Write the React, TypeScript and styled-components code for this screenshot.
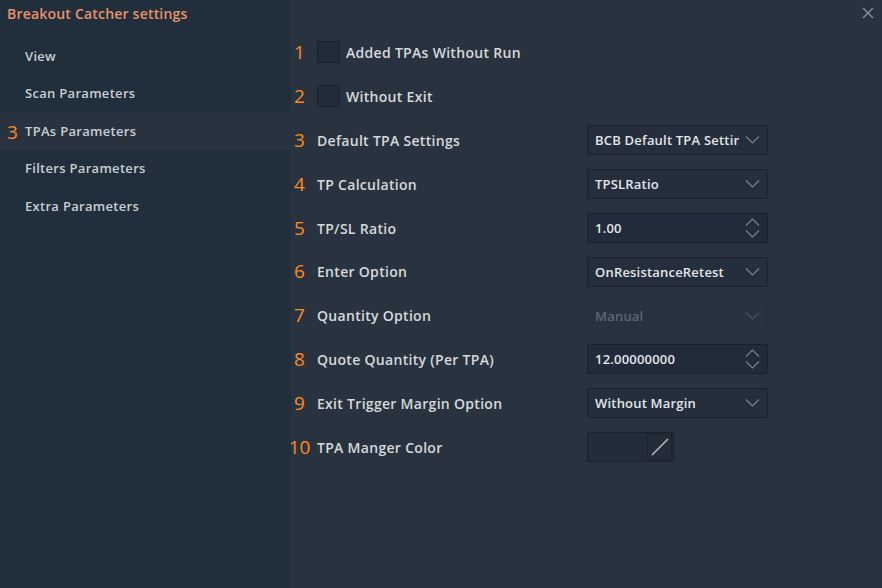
import React from 'react'
import styled, { createGlobalStyle } from 'styled-components'

const GlobalStyle = createGlobalStyle`
  html, body {
    margin: 0;
    padding: 0;
    background: #29333f;
  }
  * {
    box-sizing: border-box;
  }
`

const Window = styled.div`
  display: flex;
  width: 882px;
  height: 588px;
  overflow: hidden;
  background: #29333f;
  font-family: 'Open Sans', 'Noto Sans', sans-serif;
  position: relative;
`

const Sidebar = styled.div`
  width: 291px;
  flex-shrink: 0;
  background: #212e3c;
  display: flex;
  flex-direction: column;
`

const Title = styled.div`
  height: 26px;
  padding: 4px 0 0 7px;
  font-size: 14px;
  font-weight: 600;
  letter-spacing: 0.2px;
  color: #e8926a;
`

const NavList = styled.div`
  display: flex;
  flex-direction: column;
  padding-top: 11px;
`

const NavItem = styled.div<{ $active?: boolean }>`
  height: 37.5px;
  display: flex;
  align-items: center;
  padding-left: 25px;
  position: relative;
  font-size: 13px;
  font-weight: 600;
  letter-spacing: 0.3px;
  color: #c9ced4;
  background: ${(p) => (p.$active ? '#29333f' : 'transparent')};
`

const NavMark = styled.span`
  position: absolute;
  left: 7px;
  top: 7px;
  font-size: 19px;
  font-weight: 400;
  letter-spacing: 0;
  color: #ff8a1c;
`

const Main = styled.div`
  flex: 1;
  display: flex;
  flex-direction: column;
  padding-top: 31px;
`

const Row = styled.div`
  height: 43.8px;
  display: flex;
  align-items: center;
`

const Num = styled.div`
  width: 25px;
  margin-left: -4px;
  text-align: center;
  font-size: 19px;
  color: #ff8a1c;
  line-height: 1;
`

const Label = styled.div`
  width: 270px;
  margin-left: 5px;
  font-size: 14px;
  font-weight: 600;
  letter-spacing: 0.3px;
  color: #d6d9dc;
`

const CheckRow = styled.div`
  display: flex;
  align-items: center;
  gap: 6px;
  margin-left: 5px;
  font-size: 14px;
  font-weight: 600;
  letter-spacing: 0.3px;
  color: #d6d9dc;
`

const Checkbox = styled.div`
  width: 23px;
  height: 22px;
  background: #222c38;
  border: 1px solid #1a222b;
  border-radius: 2px;
  margin-top: -1px;
`

const Field = styled.div<{ $disabled?: boolean; $input?: boolean }>`
  width: 181px;
  height: 30px;
  display: flex;
  align-items: center;
  justify-content: space-between;
  padding: 0 7px 0 7px;
  background: ${(p) => (p.$disabled ? '#29333f' : p.$input ? '#212b39' : '#242e3c')};
  border: 1px solid ${(p) => (p.$disabled ? '#252e3a' : '#1a212a')};
  border-radius: 2px;
  font-size: 13px;
  font-weight: 600;
  letter-spacing: 0.2px;
  color: ${(p) => (p.$disabled ? '#5f6670' : '#e3e6ea')};
`

const FieldText = styled.span`
  white-space: nowrap;
  overflow: hidden;
  flex: 1;
  margin-right: 6px;
`

const ColorBox = styled.div`
  width: 87px;
  height: 30px;
  display: flex;
  justify-content: flex-end;
  padding: 1px;
  background: #232d3a;
  border: 1px solid #1a212a;
  border-radius: 2px;
`

const Swatch = styled.div`
  width: 25px;
  height: 26px;
  border: 1px solid #1c232c;
  display: flex;
  align-items: center;
  justify-content: center;
`

const Close = styled.div`
  position: absolute;
  right: 6px;
  top: 5px;
  width: 16px;
  height: 16px;
  display: flex;
  align-items: center;
  justify-content: center;
`

const Chevron = ({ up, color = '#7b828c' }: { up?: boolean; color?: string }) => (
  <svg width="15" height="8" viewBox="0 0 15 8">
    <path
      d={up ? 'M1 7.5L7.5 1L14 7.5' : 'M1 0.5L7.5 7L14 0.5'}
      fill="none"
      stroke={color}
      strokeWidth="1.2"
    />
  </svg>
)

const Spinner = styled.div`
  display: flex;
  flex-direction: column;
  gap: 4px;
`

interface FieldRow {
  label: string
  value?: string
  kind: 'check' | 'select' | 'number' | 'disabled' | 'color'
}

const rows: FieldRow[] = [
  { label: 'Added TPAs Without Run', kind: 'check' },
  { label: 'Without Exit', kind: 'check' },
  { label: 'Default TPA Settings', value: 'BCB Default TPA Settings', kind: 'select' },
  { label: 'TP Calculation', value: 'TPSLRatio', kind: 'select' },
  { label: 'TP/SL Ratio', value: '1.00', kind: 'number' },
  { label: 'Enter Option', value: 'OnResistanceRetest', kind: 'select' },
  { label: 'Quantity Option', value: 'Manual', kind: 'disabled' },
  { label: 'Quote Quantity (Per TPA)', value: '12.00000000', kind: 'number' },
  { label: 'Exit Trigger Margin Option', value: 'Without Margin', kind: 'select' },
  { label: 'TPA Manger Color', kind: 'color' },
]

const navItems = ['View', 'Scan Parameters', 'TPAs Parameters', 'Filters Parameters', 'Extra Parameters']

function Control({ row }: { row: FieldRow }) {
  if (row.kind === 'color') {
    return (
      <ColorBox>
        <Swatch>
          <svg width="20" height="20" viewBox="0 0 20 20">
            <path d="M2 18L18 2" stroke="#b9bcc0" strokeWidth="1.6" />
          </svg>
        </Swatch>
      </ColorBox>
    )
  }
  if (row.kind === 'number') {
    return (
      <Field $input>
        <FieldText>{row.value}</FieldText>
        <Spinner>
          <Chevron up />
          <Chevron />
        </Spinner>
      </Field>
    )
  }
  const disabled = row.kind === 'disabled'
  return (
    <Field $disabled={disabled}>
      <FieldText>{row.value}</FieldText>
      <Chevron color={disabled ? '#4a525c' : '#7b828c'} />
    </Field>
  )
}

export default function App() {
  return (
    <>
      <GlobalStyle />
      <Window>
        <Sidebar>
          <Title>Breakout Catcher settings</Title>
          <NavList>
            {navItems.map((item, idx) => (
              <NavItem key={item} $active={idx === 2}>
                {idx === 2 && <NavMark>3</NavMark>}
                {item}
              </NavItem>
            ))}
          </NavList>
        </Sidebar>
        <Main>
          {rows.map((row, idx) => (
            <Row key={row.label}>
              <Num>{idx + 1}</Num>
              {row.kind === 'check' ? (
                <CheckRow>
                  <Checkbox />
                  {row.label}
                </CheckRow>
              ) : (
                <>
                  <Label>{row.label}</Label>
                  <Control row={row} />
                </>
              )}
            </Row>
          ))}
        </Main>
        <Close>
          <svg width="12" height="12" viewBox="0 0 12 12">
            <path d="M1 1L11 11M11 1L1 11" stroke="#8a9098" strokeWidth="1.4" />
          </svg>
        </Close>
      </Window>
    </>
  )
}
